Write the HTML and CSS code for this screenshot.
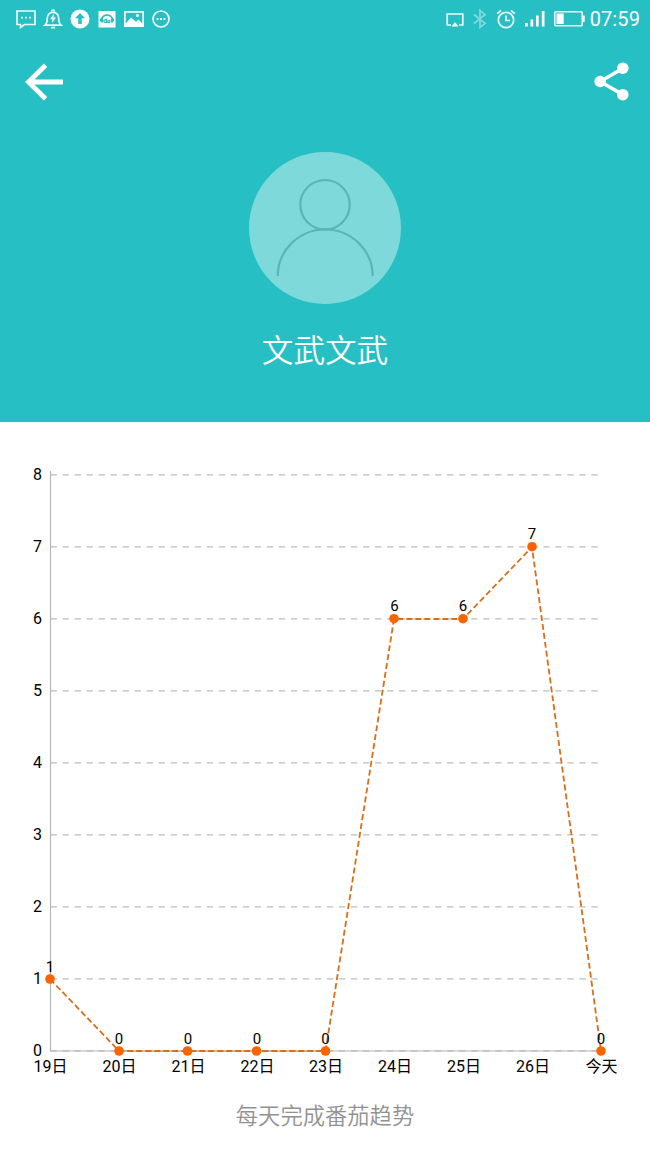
FILE: index.html
```html
<!DOCTYPE html>
<html lang="zh-CN">
<head>
<meta charset="utf-8">
<title>番茄趋势</title>
<link rel="stylesheet" href="styles.css">
</head>
<body>
<header class="hero">
  <div class="status">
    <div class="status-left">
      <svg class="line-icon" width="20" height="20" viewBox="0 0 20 20"><path d="M1 2h18v13.500H8.500L4.500 18.500V15.500H1z"/><path class="dots" d="M5 8.700h2M9 8.700h2M13 8.700h2"/></svg>
      <svg class="line-icon" width="20" height="20" viewBox="0 0 20 20"><path d="M2 16.200c2-1.700 2.300-3 2.300-7.200a5.700 5.700 0 0 1 11.400 0c0 4.200.3 5.500 2.300 7.200zM8.500 2.500c0-2 3-2 3 0M8 18.700h4"/><path class="solid" d="M10.800 5L7 10.200h2.500L9 14l4-5.500h-2.500z"/></svg>
      <svg width="20" height="20" viewBox="0 0 20 20"><circle class="solid" cx="10" cy="10" r="9.500"/><path class="cut" d="M10 4l5 5.300h-3.300V15H8.300V9.300H5z"/></svg>
      <svg width="20" height="20" viewBox="0 0 20 20"><path class="solid" d="M1.500 2H18.500V18.500H1.500z"/><path class="cut-line" d="M4.500 11C4.500 4.500 15.500 4.500 15.500 11"/><path class="cut" d="M3 9.500h3v4H4.500L3 12zM17 9.500h-3v4h1.500L17 12z"/><path class="cut-line thin" d="M9.500 9.500v3.800H8a1.200 1.200 0 0 1 0-2.500h1.500M11 11v2.300h1.700V11"/></svg>
      <svg width="20" height="20" viewBox="0 0 20 20"><path class="solid" fill-rule="evenodd" d="M0 2h20v16H0zM1.700 3.700V14.500L7 8.500 12 12.800 14.500 10.500 18.300 14.500V3.700z"/><circle class="solid" cx="13.500" cy="6.500" r="1.600"/></svg>
      <svg class="line-icon" width="20" height="20" viewBox="0 0 20 20"><circle cx="10" cy="10" r="8"/><path class="dots" d="M5.500 10h2M9 10h2M12.500 10h2"/></svg>
    </div>
    <div class="status-right">
      <svg class="line-icon" width="18" height="20" viewBox="0 0 18 20"><path d="M5 16H1.200V5h15.600v11H13"/><path class="solid" d="M9 13l3.500 4.500h-7z"/></svg>
      <svg class="line-icon faint" width="14" height="20" viewBox="0 0 14 20"><path d="M1 5.500l11 8.800L7 18.500v-17l5 4.200L1 14.500"/></svg>
      <svg class="line-icon" width="20" height="20" viewBox="0 0 20 20"><circle cx="10" cy="11" r="7.700"/><path d="M10 6.500V11.500h4M1.200 4.700L5 1.500M18.800 4.700L15 1.500"/></svg>
      <svg width="20" height="20" viewBox="0 0 20 20"><path class="solid" d="M0 14h2.700v3.500H0zM5.500 10.500h2.700v7H5.500zM11 6.500h2.700v11H11zM16.800 2h2.700v15.500h-2.700z"/></svg>
      <svg width="31" height="20" viewBox="0 0 31 20"><rect class="outline" x=".8" y="2.800" width="27.400" height="14" rx="1"/><path class="solid" d="M2.500 4.500h7.200v10.600H2.500zM28.500 6.500h2.200v6.500h-2.200z"/></svg>
      <span class="clock">07:59</span>
    </div>
  </div>
  <nav class="toolbar">
    <svg width="40" height="40" viewBox="0 0 40 40"><path class="arrow" d="M21.500 3.200L4.500 20 21.500 36.800M4.500 20H39"/></svg>
    <svg width="36" height="40" viewBox="0 0 36 40"><path class="share-line" d="M29 6.200L6.200 19.500 29 32.700"/><circle class="solid" cx="28.800" cy="6.200" r="5.800"/><circle class="solid" cx="6.200" cy="19.500" r="5.800"/><circle class="solid" cx="28.800" cy="32.700" r="5.800"/></svg>
  </nav>
  <div class="profile">
    <svg width="152" height="152" viewBox="0 0 152 152"><circle class="avatar-bg" cx="76" cy="76" r="76"/><g class="avatar-line"><circle cx="76" cy="52.700" r="24.700"/><path d="M28.700 124A47.500 46.500 0 0 1 123.700 124"/></g></svg>
    <h1 class="name">文武文武</h1>
  </div>
</header>
<main class="trend">
  <svg class="chart" width="650" height="660" viewBox="0 422 650 660">
    <path class="grid" d="M50.500 474.800H600M50.500 546.800H600M50.500 618.800H600M50.500 690.800H600M50.500 762.800H600M50.500 834.800H600M50.500 906.800H600M50.500 978.800H600M50.500 1050.800H600"/>
    <path class="axis" d="M50.500 471V1051M50 1051H601"/>
    <path class="series-base" d="M119 1051H325.500"/>
    <path class="series" d="M50 979L119 1051H325.500L394 619H463L532 547 601 1051"/>
    <g class="points"><circle cx="50" cy="979" r="4.800"/><circle cx="119" cy="1051" r="4.800"/><circle cx="187.500" cy="1051" r="4.800"/><circle cx="256.500" cy="1051" r="4.800"/><circle cx="325.500" cy="1051" r="4.800"/><circle cx="394" cy="618.700" r="4.800"/><circle cx="463" cy="618.700" r="4.800"/><circle cx="532" cy="546.700" r="4.800"/><circle cx="601" cy="1051" r="4.800"/></g>
    <g class="label y"><text x="42" y="480">8</text><text x="42" y="552">7</text><text x="42" y="624">6</text><text x="42" y="696">5</text><text x="42" y="768">4</text><text x="42" y="840">3</text><text x="42" y="912">2</text><text x="42" y="984">1</text><text x="42" y="1056">0</text></g>
    <g class="label x"><text x="50.500" y="1072">19日</text><text x="119.500" y="1072">20日</text><text x="188.500" y="1072">21日</text><text x="257.500" y="1072">22日</text><text x="326" y="1072">23日</text><text x="395" y="1072">24日</text><text x="464" y="1072">25日</text><text x="533" y="1072">26日</text><text x="601.500" y="1072">今天</text></g>
    <g class="label value"><text x="50" y="972">1</text><text x="119" y="1043.500">0</text><text x="188" y="1043.500">0</text><text x="257" y="1043.500">0</text><text x="325.500" y="1043.500">0</text><text x="394.500" y="611">6</text><text x="463" y="611">6</text><text x="532" y="539">7</text><text x="601" y="1043.500">0</text></g>
  </svg>
  <p class="caption">每天完成番茄趋势</p>
</main>
</body>
</html>
```
FILE: styles.css
```css
body {
  margin: 0;
  background: #fff;
  font-family: Roboto, "Noto Sans CJK SC", sans-serif;
}
svg { display: block; fill: none; }
.hero {
  height: 422px;
  background: #26bfc3;
  color: #fff;
  overflow: hidden;
}
.status {
  display: flex;
  justify-content: space-between;
  height: 38px;
  padding: 0 10px 0 16px;
}
.status-left, .status-right { display: flex; align-items: center; }
.status-left { gap: 7.1px; }
.status-right { gap: 9px; }
.clock { margin-left: -4px; font-size: 20px; line-height: 38px; letter-spacing: 0.1px; }
.line-icon { stroke: #effafa; stroke-width: 1.7; }
.faint { opacity: 0.45; }
.dots { stroke-width: 1.8; }
.solid { fill: #fff; stroke: none; }
.cut { fill: #26bfc3; }
.cut-line { stroke: #26bfc3; stroke-width: 1.8; }
.thin { stroke-width: 1.2; }
.outline { stroke: #effafa; stroke-width: 1.5; }
.toolbar {
  display: flex;
  justify-content: space-between;
  padding: 24px 20px 0 24px;
}
.arrow { stroke: #fff; stroke-width: 4.8; }
.share-line { stroke: #fff; stroke-width: 3.6; }
.profile {
  display: flex;
  flex-direction: column;
  align-items: center;
  padding-top: 50px;
}
.avatar-bg { fill: #7edada; }
.avatar-line { stroke: #59b5b6; stroke-width: 2.2; }
.name {
  margin: 24px 0 0;
  font-size: 31.6px;
  font-weight: 350;
  line-height: 48px;
}
.grid { stroke: #bdbdbd; stroke-width: 1.2; stroke-dasharray: 6.3 5.72; }
.axis { stroke: #b5b5b5; stroke-width: 1.2; }
.series-base { stroke: #c0a996; stroke-width: 1; }
.series { stroke: #d86f18; stroke-width: 1.8; stroke-dasharray: 6 3; }
.points { fill: #fa6400; }
.label { fill: #000; text-anchor: middle; font-size: 16px; }
.label.y { text-anchor: end; }
.label.value { font-size: 15px; }
.caption {
  margin: 17px 0 0;
  color: #929292;
  font-size: 22.3px;
  font-weight: 350;
  line-height: 34px;
  text-align: center;
}
```
